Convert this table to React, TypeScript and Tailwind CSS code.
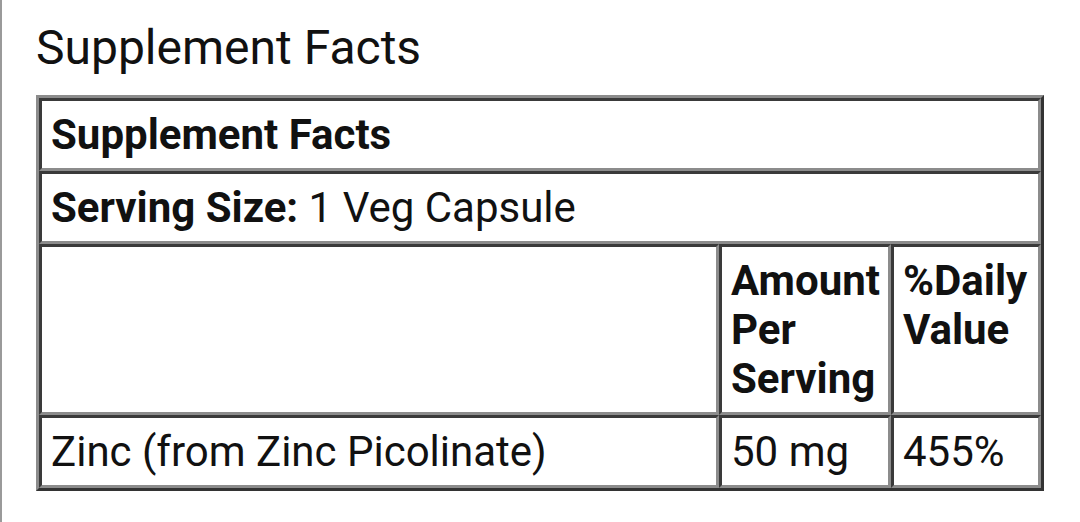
import React from "react";

const cell =
  "border-[3px] border-t-[#3a3a3a] border-l-[#3a3a3a] border-b-[#8c8c8c] border-r-[#8c8c8c] p-[9px] leading-[49px]";

export default function App() {
  return (
    <div
      className="w-[1080px] h-[522px] bg-white border-l-[2px] border-l-[#9a9a9a] text-[#111] overflow-hidden"
      style={{ fontFamily: "Roboto, 'Noto Sans', sans-serif" }}
    >
      <div className="pl-[34px] pt-[19px]">
        <h3 className="text-[48px] font-normal leading-[57px] m-0">Supplement Facts</h3>
        <table className="mt-[19px] table-fixed border-separate border-spacing-0 w-[1008px] border-[3px] border-t-[#8c8c8c] border-l-[#8c8c8c] border-b-[#333] border-r-[#333] text-[42px]">
          <colgroup>
            <col className="w-[680px]" />
            <col className="w-[172px]" />
            <col className="w-[150px]" />
          </colgroup>
          <tbody>
            <tr>
              <th colSpan={3} className={`${cell} text-left font-bold`}>
                Supplement Facts
              </th>
            </tr>
            <tr>
              <td colSpan={3} className={`${cell} text-left`}>
                <span className="font-bold">Serving Size:</span> 1 Veg Capsule
              </td>
            </tr>
            <tr>
              <th className={`${cell} align-top`}></th>
              <th className={`${cell} text-left align-top font-bold`}>Amount Per Serving</th>
              <th className={`${cell} text-left align-top font-bold`}>%Daily Value</th>
            </tr>
            <tr>
              <td className={`${cell} text-left`}>Zinc (from Zinc Picolinate)</td>
              <td className={`${cell} text-left`}>50 mg</td>
              <td className={`${cell} text-left`}>455%</td>
            </tr>
          </tbody>
        </table>
      </div>
    </div>
  );
}
